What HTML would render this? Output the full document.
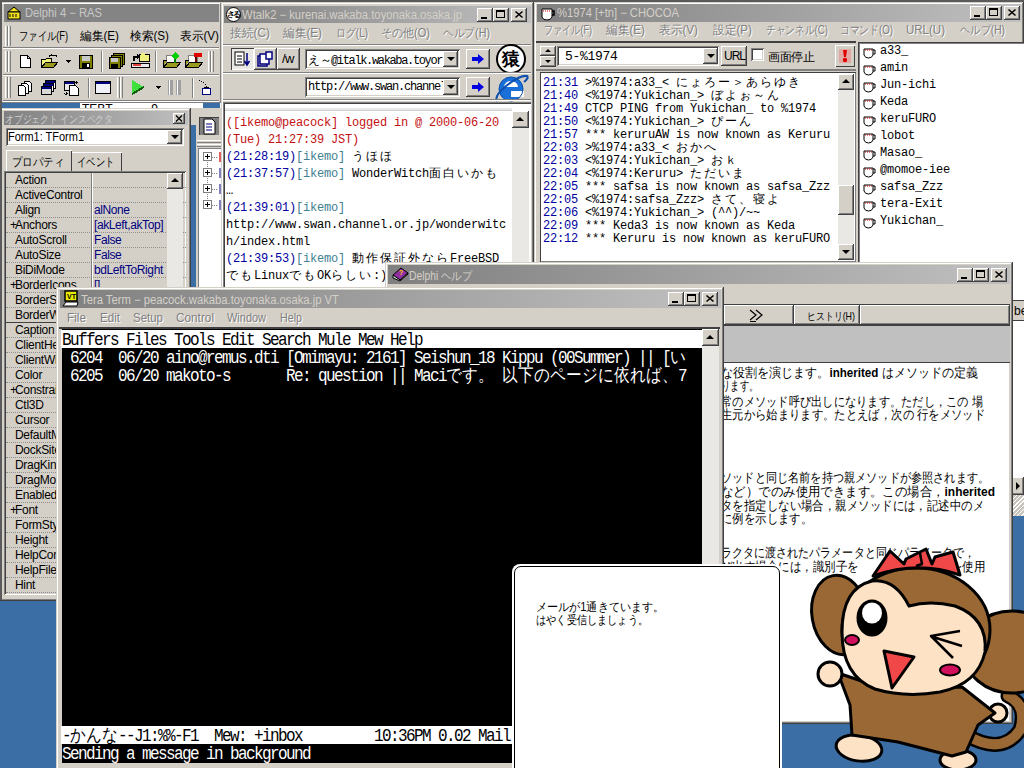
<!DOCTYPE html><html><head><meta charset="utf-8"><style>
*{margin:0;padding:0;box-sizing:border-box}
html,body{width:1024px;height:768px;overflow:hidden;background:#3a6ea5;font-family:"Liberation Sans",sans-serif;font-size:12px;color:#000}
.a{position:absolute}
.nw{white-space:nowrap}
.w{position:absolute;background:#d4d0c8;box-shadow:inset -1px -1px #404040,inset 1px 1px #d4d0c8,inset -2px -2px #808080,inset 2px 2px #fff}
.sunk{position:absolute;box-shadow:inset 1px 1px #808080,inset -1px -1px #fff,inset 2px 2px #404040,inset -2px -2px #d4d0c8}
.btn{position:absolute;background:#d4d0c8;box-shadow:inset -1px -1px #404040,inset 1px 1px #fff,inset -2px -2px #808080}
.m{font-family:"Liberation Mono",monospace}
.pre{white-space:pre}
.dis{color:#808080;text-shadow:1px 1px #fff}
.jp{font-size:11px;letter-spacing:-0.3px}
</style></head><body>
<div class="a" style="left:0px;top:0px;width:1024px;height:2px;background:#5a5a5a"></div>
<div class="w" style="left:0px;top:2px;width:222px;height:102px;"></div>
<div class="a" style="left:4px;top:4px;width:215px;height:18px;background:#848484;overflow:hidden"><span class="a nw" style="left:20px;top:0;line-height:18px;color:#d4d0c8;font-size:12px;"></span></div>
<svg class="a" style="left:25px;top:3px;overflow:visible" width="79" height="20"><text x="0" y="14" font-size="12" fill="#c8c8c8" textLength="77" lengthAdjust="spacingAndGlyphs" >Delphi 4 − RAS</text></svg>
<svg class="a" style="left:6px;top:5px" width="16" height="16"><path d="M2 7L8 2L14 7Z" fill="#f0e020" stroke="#000"/><rect x="2" y="7" width="12" height="7" fill="#f0e020" stroke="#000"/><path d="M4 9v3M7 9v3M10 9v3" stroke="#000"/></svg>
<svg class="a" style="left:19px;top:26px;overflow:visible" width="51" height="20"><text x="0" y="14" font-size="12" fill="#000" textLength="49" lengthAdjust="spacingAndGlyphs" >ファイル(F)</text></svg>
<svg class="a" style="left:80px;top:26px;overflow:visible" width="41" height="20"><text x="0" y="14" font-size="12" fill="#000" textLength="39" lengthAdjust="spacingAndGlyphs" >編集(E)</text></svg>
<svg class="a" style="left:130px;top:26px;overflow:visible" width="41" height="20"><text x="0" y="14" font-size="12" fill="#000" textLength="39" lengthAdjust="spacingAndGlyphs" >検索(S)</text></svg>
<svg class="a" style="left:180px;top:26px;overflow:visible" width="41" height="20"><text x="0" y="14" font-size="12" fill="#000" textLength="39" lengthAdjust="spacingAndGlyphs" >表示(V)</text></svg>
<div class="a" style="left:5px;top:26px;width:3px;height:20px;border-left:1px solid #fff;border-right:1px solid #808080"></div>
<div class="a" style="left:8px;top:26px;width:3px;height:20px;border-left:1px solid #fff;border-right:1px solid #808080"></div>
<div class="a" style="left:3px;top:47px;width:216px;height:2px;box-shadow:inset 0 1px #808080,inset 0 -1px #fff"></div>
<div class="a" style="left:3px;top:74px;width:216px;height:2px;box-shadow:inset 0 1px #808080,inset 0 -1px #fff"></div>
<div class="a" style="left:3px;top:100px;width:216px;height:2px;box-shadow:inset 0 1px #808080,inset 0 -1px #fff"></div>
<div class="a" style="left:5px;top:51px;width:3px;height:21px;border-left:1px solid #fff;border-right:1px solid #808080"></div>
<div class="a" style="left:8px;top:51px;width:3px;height:21px;border-left:1px solid #fff;border-right:1px solid #808080"></div>
<div class="a" style="left:5px;top:77px;width:3px;height:21px;border-left:1px solid #fff;border-right:1px solid #808080"></div>
<div class="a" style="left:8px;top:77px;width:3px;height:21px;border-left:1px solid #fff;border-right:1px solid #808080"></div>
<svg class="a" style="left:0;top:0" width="222" height="104" shape-rendering="crispEdges">
<g stroke="#000" stroke-width="1">
<path d="M20.5 55.5H27.5L30.5 58.5V67.5H20.5Z" fill="#fff"/><path d="M27.5 55.5V58.5H30.5" fill="none"/>
<path d="M41.5 59.5H45.5L46.5 58.5H51.5V67.5H41.5Z" fill="#f0f080"/>
<path d="M41.5 67.5L45.5 62.5H57.5L53.5 67.5Z" fill="#9a9a20"/>
<path d="M48.5 57.5Q51 53 55.5 56.5" fill="none"/><path d="M54 55h3v3z" fill="#000" stroke="none"/>
</g>
<path d="M65 60h6l-3 3z" fill="#000"/>
<rect x="79.5" y="55.5" width="13" height="13" fill="#808000" stroke="#000"/>
<rect x="82" y="56" width="8" height="5" fill="#c8c8c8"/><rect x="82" y="63" width="8" height="5" fill="#000"/><rect x="87" y="64" width="2" height="3" fill="#fff"/>
<rect x="101" y="51" width="1" height="21" fill="#808080"/><rect x="102" y="51" width="1" height="21" fill="#fff"/>
<g stroke="#000"><rect x="113.5" y="53.5" width="11" height="11" fill="#808000"/><rect x="111.5" y="55.5" width="11" height="11" fill="#808000"/><rect x="109.5" y="57.5" width="11" height="11" fill="#808000"/></g>
<rect x="111" y="58" width="7" height="4" fill="#c8c8c8"/><rect x="111" y="64" width="7" height="4" fill="#000"/>
<rect x="139.5" y="54.5" width="10" height="7" fill="#f0f080" stroke="#000"/><path d="M141 53h4v2h-4z" fill="#f0f080"/>
<path d="M133.5 60.5V56.5H138" fill="none" stroke="#000" stroke-width="2"/><path d="M137 54l3 2.5-3 2.5z" fill="#000"/>
<rect x="131.5" y="63.5" width="18" height="4" fill="#e8e8e8" stroke="#000"/><rect x="133" y="64" width="8" height="2" fill="#e04040"/>
<rect x="155" y="51" width="1" height="21" fill="#808080"/><rect x="156" y="51" width="1" height="21" fill="#fff"/>
<rect x="166.5" y="55.5" width="9" height="8" fill="#fff" stroke="#808080"/>
<path d="M163.5 67.5V60.5H166.5M163.5 67.5L167.5 62.5H180.5L176.5 67.5Z" fill="#9a9a20" stroke="#000"/>
<path d="M175 52l4 4-4 4-4-4z" fill="#00d000"/><rect x="174" y="59" width="2" height="4" fill="#008000"/>
<rect x="188.5" y="55.5" width="9" height="8" fill="#fff" stroke="#808080"/>
<path d="M185.5 67.5V60.5H188.5M185.5 67.5L189.5 62.5H202.5L198.5 67.5Z" fill="#9a9a20" stroke="#000"/>
<rect x="194" y="53" width="8" height="4" fill="#e00000"/><rect x="195" y="57" width="2" height="5" fill="#600000"/>
<g stroke="#000" fill="#fff">
<path d="M24.5 81.5H29.5L31.5 83.5V91.5H24.5Z"/><path d="M21.5 83.5H26.5L28.5 85.5V93.5H21.5Z"/><path d="M18.5 85.5H23.5L25.5 87.5V95.5H18.5Z"/>
<rect x="45.5" y="80.5" width="10" height="8"/><rect x="43.5" y="83.5" width="10" height="8"/><rect x="41.5" y="86.5" width="10" height="8" fill="#d8d8d8"/>
</g>
<rect x="46" y="81" width="9" height="2" fill="#000080"/><rect x="44" y="84" width="9" height="2" fill="#000080"/><rect x="42" y="87" width="9" height="2" fill="#000080"/>
<rect x="64.5" y="81.5" width="10" height="9" fill="#e8e8e8" stroke="#000"/><rect x="65" y="82" width="9" height="2" fill="#000080"/>
<path d="M69.5 85.5H75.5L78.5 88.5V95.5H69.5Z" fill="#fff" stroke="#000"/>
<path d="M76 81v3M74.5 82.5h3M66 92v3M64.5 93.5l1.5 1.5 1.5-1.5" stroke="#000" fill="none"/>
<rect x="88" y="78" width="1" height="20" fill="#808080"/><rect x="89" y="78" width="1" height="20" fill="#fff"/>
<rect x="95.5" y="81.5" width="15" height="12" fill="#f0f0f8" stroke="#000"/><rect x="96" y="82" width="14" height="2" fill="#000080"/>
<path d="M132 80L144 87L132 94Z" fill="#40e040"/><path d="M132 94L144 87" stroke="#106010" stroke-width="2" fill="none"/>
<path d="M155 86h6l-3 3z" fill="#000"/>
<rect x="168" y="80" width="5" height="15" fill="#a0a0a0"/><rect x="176" y="80" width="5" height="15" fill="#a0a0a0"/>
<rect x="169" y="80" width="1" height="15" fill="#fff"/><rect x="177" y="80" width="1" height="15" fill="#fff"/>
<rect x="192" y="78" width="1" height="20" fill="#808080"/><rect x="193" y="78" width="1" height="20" fill="#fff"/>
<path d="M199 80h1M201 81h1M203 82h1M205 84h1M206 86h1" stroke="#000"/>
<path d="M203 87h7l-3.5 3z" fill="#000"/>
<rect x="202.5" y="88.5" width="8" height="6" fill="#fff" stroke="#000080" stroke-width="1.5"/>
</svg>
<div class="a" style="left:208px;top:51px;width:3px;height:21px;border-left:1px solid #fff;border-right:1px solid #808080"></div>
<div class="a" style="left:211px;top:51px;width:3px;height:21px;border-left:1px solid #fff;border-right:1px solid #808080"></div>
<div class="a" style="left:117px;top:77px;width:3px;height:21px;border-left:1px solid #fff;border-right:1px solid #808080"></div>
<div class="a" style="left:120px;top:77px;width:3px;height:21px;border-left:1px solid #fff;border-right:1px solid #808080"></div>
<div class="a" style="left:0px;top:103px;width:222px;height:6px;background:#fff"></div>
<div class="a" style="left:0px;top:103px;width:80px;height:6px;background:#3a6ea5"></div>
<div class="a" style="left:203px;top:103px;width:17px;height:6px;background:#3a6ea5"></div>
<div class="a nw" style="left:82px;top:100px;font-size:12px;line-height:12px;overflow:hidden;height:9px;top:103px">TEBT.&nbsp;&nbsp;&nbsp;&nbsp;&nbsp;&nbsp;&nbsp;&nbsp;&nbsp;&nbsp;.9</div>
<div class="a" style="left:189px;top:108px;width:8px;height:180px;background:#d4d0c8"></div>
<div class="a" style="left:189px;top:125px;width:7px;height:162px;background:#3a6ea5"></div>
<div class="w" style="left:0px;top:108px;width:191px;height:493px;"></div>
<div class="a" style="left:4px;top:111px;width:184px;height:14px;background:linear-gradient(90deg,#808080,#c0c0c0);overflow:hidden"><span class="a nw" style="left:20px;top:0;line-height:14px;color:#d4d0c8;font-size:12px;"></span></div>
<svg class="a" style="left:5px;top:110px;overflow:visible" width="110" height="19"><text x="0" y="13" font-size="11" fill="#d0d0d0" textLength="108" lengthAdjust="spacingAndGlyphs" >オブジェクト インスペクタ</text></svg>
<div class="btn" style="left:173px;top:113px;width:12px;height:11px;"><svg width="12" height="11" class="a"><path d="M3 2.5l6 6M9 2.5l-6 6" stroke="#000" stroke-width="1.3"/></svg></div>
<div class="sunk" style="left:6px;top:128px;width:178px;height:18px;background:#fff"></div>
<svg class="a" style="left:8px;top:127px;overflow:visible" width="78" height="20"><text x="0" y="14" font-size="12" fill="#000" textLength="76" lengthAdjust="spacingAndGlyphs" >Form1: TForm1</text></svg>
<div class="btn" style="left:167px;top:130px;width:15px;height:14px;"><div class="a" style="left:4px;top:5px;width:0;height:0;border-left:4px solid transparent;border-right:4px solid transparent;border-top:4px solid #000"></div></div>
<div class="a" style="left:6px;top:150px;width:66px;height:22px;box-shadow:inset 1px 1px #fff,inset -1px 0 #404040"></div>
<svg class="a" style="left:12px;top:152px;overflow:visible" width="54" height="20"><text x="0" y="14" font-size="12" fill="#000" textLength="52" lengthAdjust="spacingAndGlyphs" >プロパティ</text></svg>
<div class="a" style="left:72px;top:152px;width:50px;height:20px;box-shadow:inset 0 1px #fff,inset -1px 0 #404040"></div>
<svg class="a" style="left:77px;top:152px;overflow:visible" width="39" height="20"><text x="0" y="14" font-size="12" fill="#000" textLength="37" lengthAdjust="spacingAndGlyphs" >イベント</text></svg>
<div class="sunk" style="left:4px;top:171px;width:182px;height:424px;background:#d4d0c8;overflow:hidden"><div class="a nw" style="left:6px;top:2px;font-size:12px;line-height:15px"></div><div class="a nw" style="left:11px;top:2px;font-size:12px;line-height:15px;letter-spacing:-0.3px">Action</div><div class="a" style="left:2px;top:16px;width:180px;height:1px;border-top:1px dotted #909090"></div><div class="a nw" style="left:6px;top:17px;font-size:12px;line-height:15px"></div><div class="a nw" style="left:11px;top:17px;font-size:12px;line-height:15px;letter-spacing:-0.3px">ActiveControl</div><div class="a" style="left:2px;top:31px;width:180px;height:1px;border-top:1px dotted #909090"></div><div class="a nw" style="left:6px;top:32px;font-size:12px;line-height:15px"></div><div class="a nw" style="left:11px;top:32px;font-size:12px;line-height:15px;letter-spacing:-0.3px">Align</div><div class="a nw" style="left:90px;top:32px;font-size:12px;line-height:15px;color:#000080;letter-spacing:-0.4px">alNone</div><div class="a" style="left:2px;top:46px;width:180px;height:1px;border-top:1px dotted #909090"></div><div class="a nw" style="left:6px;top:47px;font-size:12px;line-height:15px">+</div><div class="a nw" style="left:11px;top:47px;font-size:12px;line-height:15px;letter-spacing:-0.3px">Anchors</div><div class="a nw" style="left:90px;top:47px;font-size:12px;line-height:15px;color:#000080;letter-spacing:-0.4px">[akLeft,akTop]</div><div class="a" style="left:2px;top:61px;width:180px;height:1px;border-top:1px dotted #909090"></div><div class="a nw" style="left:6px;top:62px;font-size:12px;line-height:15px"></div><div class="a nw" style="left:11px;top:62px;font-size:12px;line-height:15px;letter-spacing:-0.3px">AutoScroll</div><div class="a nw" style="left:90px;top:62px;font-size:12px;line-height:15px;color:#000080;letter-spacing:-0.4px">False</div><div class="a" style="left:2px;top:76px;width:180px;height:1px;border-top:1px dotted #909090"></div><div class="a nw" style="left:6px;top:77px;font-size:12px;line-height:15px"></div><div class="a nw" style="left:11px;top:77px;font-size:12px;line-height:15px;letter-spacing:-0.3px">AutoSize</div><div class="a nw" style="left:90px;top:77px;font-size:12px;line-height:15px;color:#000080;letter-spacing:-0.4px">False</div><div class="a" style="left:2px;top:91px;width:180px;height:1px;border-top:1px dotted #909090"></div><div class="a nw" style="left:6px;top:92px;font-size:12px;line-height:15px"></div><div class="a nw" style="left:11px;top:92px;font-size:12px;line-height:15px;letter-spacing:-0.3px">BiDiMode</div><div class="a nw" style="left:90px;top:92px;font-size:12px;line-height:15px;color:#000080;letter-spacing:-0.4px">bdLeftToRight</div><div class="a" style="left:2px;top:106px;width:180px;height:1px;border-top:1px dotted #909090"></div><div class="a nw" style="left:6px;top:107px;font-size:12px;line-height:15px">+</div><div class="a nw" style="left:11px;top:107px;font-size:12px;line-height:15px;letter-spacing:-0.3px">BorderIcons</div><div class="a nw" style="left:90px;top:107px;font-size:12px;line-height:15px;color:#000080;letter-spacing:-0.4px">[]</div><div class="a" style="left:2px;top:121px;width:180px;height:1px;border-top:1px dotted #909090"></div><div class="a nw" style="left:6px;top:122px;font-size:12px;line-height:15px"></div><div class="a nw" style="left:11px;top:122px;font-size:12px;line-height:15px;letter-spacing:-0.3px">BorderStyle</div><div class="a" style="left:2px;top:136px;width:180px;height:1px;border-top:1px dotted #909090"></div><div class="a nw" style="left:6px;top:137px;font-size:12px;line-height:15px"></div><div class="a nw" style="left:11px;top:137px;font-size:12px;line-height:15px;letter-spacing:-0.3px">BorderWidth</div><div class="a" style="left:2px;top:151px;width:180px;height:1px;border-top:1px dotted #909090"></div><div class="a nw" style="left:6px;top:152px;font-size:12px;line-height:15px"></div><div class="a nw" style="left:11px;top:152px;font-size:12px;line-height:15px;letter-spacing:-0.3px">Caption</div><div class="a" style="left:2px;top:166px;width:180px;height:1px;border-top:1px dotted #909090"></div><div class="a nw" style="left:6px;top:167px;font-size:12px;line-height:15px"></div><div class="a nw" style="left:11px;top:167px;font-size:12px;line-height:15px;letter-spacing:-0.3px">ClientHeight</div><div class="a" style="left:2px;top:181px;width:180px;height:1px;border-top:1px dotted #909090"></div><div class="a nw" style="left:6px;top:182px;font-size:12px;line-height:15px"></div><div class="a nw" style="left:11px;top:182px;font-size:12px;line-height:15px;letter-spacing:-0.3px">ClientWidth</div><div class="a" style="left:2px;top:196px;width:180px;height:1px;border-top:1px dotted #909090"></div><div class="a nw" style="left:6px;top:197px;font-size:12px;line-height:15px"></div><div class="a nw" style="left:11px;top:197px;font-size:12px;line-height:15px;letter-spacing:-0.3px">Color</div><div class="a" style="left:2px;top:211px;width:180px;height:1px;border-top:1px dotted #909090"></div><div class="a nw" style="left:6px;top:212px;font-size:12px;line-height:15px">+</div><div class="a nw" style="left:11px;top:212px;font-size:12px;line-height:15px;letter-spacing:-0.3px">Constraints</div><div class="a" style="left:2px;top:226px;width:180px;height:1px;border-top:1px dotted #909090"></div><div class="a nw" style="left:6px;top:227px;font-size:12px;line-height:15px"></div><div class="a nw" style="left:11px;top:227px;font-size:12px;line-height:15px;letter-spacing:-0.3px">Ctl3D</div><div class="a" style="left:2px;top:241px;width:180px;height:1px;border-top:1px dotted #909090"></div><div class="a nw" style="left:6px;top:242px;font-size:12px;line-height:15px"></div><div class="a nw" style="left:11px;top:242px;font-size:12px;line-height:15px;letter-spacing:-0.3px">Cursor</div><div class="a" style="left:2px;top:256px;width:180px;height:1px;border-top:1px dotted #909090"></div><div class="a nw" style="left:6px;top:257px;font-size:12px;line-height:15px"></div><div class="a nw" style="left:11px;top:257px;font-size:12px;line-height:15px;letter-spacing:-0.3px">DefaultMonitor</div><div class="a" style="left:2px;top:271px;width:180px;height:1px;border-top:1px dotted #909090"></div><div class="a nw" style="left:6px;top:272px;font-size:12px;line-height:15px"></div><div class="a nw" style="left:11px;top:272px;font-size:12px;line-height:15px;letter-spacing:-0.3px">DockSite</div><div class="a" style="left:2px;top:286px;width:180px;height:1px;border-top:1px dotted #909090"></div><div class="a nw" style="left:6px;top:287px;font-size:12px;line-height:15px"></div><div class="a nw" style="left:11px;top:287px;font-size:12px;line-height:15px;letter-spacing:-0.3px">DragKind</div><div class="a" style="left:2px;top:301px;width:180px;height:1px;border-top:1px dotted #909090"></div><div class="a nw" style="left:6px;top:302px;font-size:12px;line-height:15px"></div><div class="a nw" style="left:11px;top:302px;font-size:12px;line-height:15px;letter-spacing:-0.3px">DragMode</div><div class="a" style="left:2px;top:316px;width:180px;height:1px;border-top:1px dotted #909090"></div><div class="a nw" style="left:6px;top:317px;font-size:12px;line-height:15px"></div><div class="a nw" style="left:11px;top:317px;font-size:12px;line-height:15px;letter-spacing:-0.3px">Enabled</div><div class="a" style="left:2px;top:331px;width:180px;height:1px;border-top:1px dotted #909090"></div><div class="a nw" style="left:6px;top:332px;font-size:12px;line-height:15px">+</div><div class="a nw" style="left:11px;top:332px;font-size:12px;line-height:15px;letter-spacing:-0.3px">Font</div><div class="a" style="left:2px;top:346px;width:180px;height:1px;border-top:1px dotted #909090"></div><div class="a nw" style="left:6px;top:347px;font-size:12px;line-height:15px"></div><div class="a nw" style="left:11px;top:347px;font-size:12px;line-height:15px;letter-spacing:-0.3px">FormStyle</div><div class="a" style="left:2px;top:361px;width:180px;height:1px;border-top:1px dotted #909090"></div><div class="a nw" style="left:6px;top:362px;font-size:12px;line-height:15px"></div><div class="a nw" style="left:11px;top:362px;font-size:12px;line-height:15px;letter-spacing:-0.3px">Height</div><div class="a" style="left:2px;top:376px;width:180px;height:1px;border-top:1px dotted #909090"></div><div class="a nw" style="left:6px;top:377px;font-size:12px;line-height:15px"></div><div class="a nw" style="left:11px;top:377px;font-size:12px;line-height:15px;letter-spacing:-0.3px">HelpContext</div><div class="a" style="left:2px;top:391px;width:180px;height:1px;border-top:1px dotted #909090"></div><div class="a nw" style="left:6px;top:392px;font-size:12px;line-height:15px"></div><div class="a nw" style="left:11px;top:392px;font-size:12px;line-height:15px;letter-spacing:-0.3px">HelpFile</div><div class="a" style="left:2px;top:406px;width:180px;height:1px;border-top:1px dotted #909090"></div><div class="a nw" style="left:6px;top:407px;font-size:12px;line-height:15px"></div><div class="a nw" style="left:11px;top:407px;font-size:12px;line-height:15px;letter-spacing:-0.3px">Hint</div><div class="a" style="left:2px;top:421px;width:180px;height:1px;border-top:1px dotted #909090"></div><div class="a" style="left:87px;top:2px;width:2px;height:430px;border-left:1px solid #808080;border-right:1px solid #fff"></div></div>
<div class="a" style="left:5px;top:322px;width:52px;height:15px;box-shadow:inset 1px 1px #404040"></div>
<div class="a" style="left:167px;top:173px;width:16px;height:400px;background:#eae8e4"></div>
<div class="btn" style="left:167px;top:173px;width:16px;height:16px;"><div class="a" style="left:4px;top:5px;width:0;height:0;border-left:4px solid transparent;border-right:4px solid transparent;border-bottom:4px solid #000"></div></div>
<div class="a" style="left:196px;top:108px;width:26px;height:180px;background:#d4d0c8"></div>
<div class="a" style="left:199px;top:117px;width:20px;height:18px;background:#808080;box-shadow:inset 1px 1px #404040"><svg class="a" style="left:4px;top:1px" width="14" height="17"><path d="M1 1h8l3 3v12H1z" fill="#fff" stroke="#000"/><path d="M3 6h6M3 9h6M3 12h6" stroke="#000080" stroke-width="1.2"/></svg></div>
<div class="a" style="left:197px;top:140px;width:24px;height:3px;border-top:1px solid #fff;border-bottom:1px solid #808080"></div>
<div class="a" style="left:197px;top:144px;width:24px;height:3px;border-top:1px solid #fff;border-bottom:1px solid #808080"></div>
<div class="a" style="left:198px;top:148px;width:23px;height:140px;background:#fff;box-shadow:inset 1px 1px #808080"></div>
<div class="a" style="left:207px;top:162px;width:1px;height:45px;border-left:1px dotted #808080"></div>
<div class="a" style="left:203px;top:152px;width:9px;height:9px;border:1px solid #808080;background:#fff"><div class="a" style="left:1px;top:3px;width:5px;height:1px;background:#000"></div><div class="a" style="left:3px;top:1px;width:1px;height:5px;background:#000"></div></div>
<div class="a" style="left:212px;top:157px;width:5px;height:1px;border-top:1px dotted #808080"></div>
<div class="a" style="left:203px;top:168px;width:9px;height:9px;border:1px solid #808080;background:#fff"><div class="a" style="left:1px;top:3px;width:5px;height:1px;background:#000"></div><div class="a" style="left:3px;top:1px;width:1px;height:5px;background:#000"></div></div>
<div class="a" style="left:212px;top:173px;width:5px;height:1px;border-top:1px dotted #808080"></div>
<div class="a" style="left:203px;top:184px;width:9px;height:9px;border:1px solid #808080;background:#fff"><div class="a" style="left:1px;top:3px;width:5px;height:1px;background:#000"></div><div class="a" style="left:3px;top:1px;width:1px;height:5px;background:#000"></div></div>
<div class="a" style="left:212px;top:189px;width:5px;height:1px;border-top:1px dotted #808080"></div>
<div class="a" style="left:203px;top:200px;width:9px;height:9px;border:1px solid #808080;background:#fff"><div class="a" style="left:1px;top:3px;width:5px;height:1px;background:#000"></div><div class="a" style="left:3px;top:1px;width:1px;height:5px;background:#000"></div></div>
<div class="a" style="left:212px;top:205px;width:5px;height:1px;border-top:1px dotted #808080"></div>
<div class="a" style="left:219px;top:152px;width:2px;height:10px;background:#e06060"></div>
<div class="a" style="left:219px;top:168px;width:2px;height:10px;background:#8080c0"></div>
<div class="a" style="left:219px;top:184px;width:2px;height:10px;background:#8080c0"></div>
<div class="a" style="left:219px;top:200px;width:2px;height:10px;background:#8080c0"></div>
<div class="w" style="left:221px;top:2px;width:313px;height:290px;"></div>
<div class="a" style="left:224px;top:6px;width:307px;height:17px;background:linear-gradient(90deg,#808080,#c0c0c0);overflow:hidden"><span class="a nw" style="left:20px;top:0;line-height:17px;color:#d4d0c8;font-size:12px;"></span></div>
<svg class="a" style="left:242px;top:5px;overflow:visible" width="222" height="20"><text x="0" y="14" font-size="12" fill="#d4d0c8" textLength="220" lengthAdjust="spacingAndGlyphs" >Wtalk2 − kurenai.wakaba.toyonaka.osaka.jp</text></svg>
<div class="a" style="left:226px;top:7px;width:15px;height:15px;border-radius:50%;background:#fff;border:1px solid #000;font-size:8px;font-weight:bold;line-height:13px;text-align:center;white-space:nowrap;letter-spacing:-2px;text-indent:-2px">さる</div>
<div class="btn" style="left:511px;top:8px;width:16px;height:14px;"><svg width="16" height="14" class="a" style="left:0;top:0"><path d="M4.5 3.5l7 6M11.5 3.5l-7 6" stroke="#000" stroke-width="1.6"/></svg></div>
<div class="btn" style="left:493px;top:8px;width:16px;height:14px;"><div class="a" style="left:3px;top:2px;width:9px;height:8px;border:1px solid #000;border-top-width:2px"></div></div>
<div class="btn" style="left:477px;top:8px;width:16px;height:14px;"><div class="a" style="left:4px;top:9px;width:6px;height:2px;background:#000"></div></div>
<svg class="a" style="left:230px;top:23px;overflow:visible" width="42" height="20"><text x="1" y="15" font-size="12" fill="#fff" textLength="40" lengthAdjust="spacingAndGlyphs" >接続(C)</text><text x="0" y="14" font-size="12" fill="#808080" textLength="40" lengthAdjust="spacingAndGlyphs" >接続(C)</text></svg>
<svg class="a" style="left:283px;top:23px;overflow:visible" width="41" height="20"><text x="1" y="15" font-size="12" fill="#fff" textLength="39" lengthAdjust="spacingAndGlyphs" >編集(E)</text><text x="0" y="14" font-size="12" fill="#808080" textLength="39" lengthAdjust="spacingAndGlyphs" >編集(E)</text></svg>
<svg class="a" style="left:336px;top:23px;overflow:visible" width="34" height="20"><text x="1" y="15" font-size="12" fill="#fff" textLength="32" lengthAdjust="spacingAndGlyphs" >ログ(L)</text><text x="0" y="14" font-size="12" fill="#808080" textLength="32" lengthAdjust="spacingAndGlyphs" >ログ(L)</text></svg>
<svg class="a" style="left:381px;top:23px;overflow:visible" width="51" height="20"><text x="1" y="15" font-size="12" fill="#fff" textLength="49" lengthAdjust="spacingAndGlyphs" >その他(O)</text><text x="0" y="14" font-size="12" fill="#808080" textLength="49" lengthAdjust="spacingAndGlyphs" >その他(O)</text></svg>
<svg class="a" style="left:443px;top:23px;overflow:visible" width="49" height="20"><text x="1" y="15" font-size="12" fill="#fff" textLength="47" lengthAdjust="spacingAndGlyphs" >ヘルプ(H)</text><text x="0" y="14" font-size="12" fill="#808080" textLength="47" lengthAdjust="spacingAndGlyphs" >ヘルプ(H)</text></svg>
<div class="a" style="left:223px;top:44px;width:308px;height:2px;box-shadow:inset 0 1px #808080,inset 0 -1px #fff"></div>
<div class="a" style="left:231px;top:48px;width:23px;height:22px;box-shadow:inset 1px 1px #404040,inset -1px -1px #fff;background:#eae8e4"><svg class="a" style="left:3px;top:3px" width="17" height="16"><rect x="1" y="1" width="9" height="13" fill="#fff" stroke="#000"/><path d="M3 5h5M3 8h5M3 11h5" stroke="#000"/><path d="M13 2v11M10.5 10l2.5 4 2.5-4" stroke="#000080" stroke-width="1.5" fill="none"/></svg></div>
<div class="btn" style="left:254px;top:48px;width:23px;height:22px;"><svg class="a" style="left:3px;top:3px" width="17" height="16"><rect x="1" y="5" width="9" height="10" fill="#d4d0c8" stroke="#000080" stroke-width="1.5"/><rect x="3" y="3" width="9" height="10" fill="#fff" stroke="#000080" stroke-width="1.5"/><rect x="9" y="1" width="6" height="7" fill="#fff" stroke="#000080" stroke-width="1.5"/></svg></div>
<div class="btn" style="left:277px;top:48px;width:23px;height:22px;"><span class="a nw" style="left:5px;top:3px;font-size:13px;letter-spacing:-0.5px">/w</span></div>
<div class="sunk" style="left:305px;top:49px;width:155px;height:20px;background:#fff"><span class="a nw m" style="left:3px;top:3px;font-size:12px;letter-spacing:-1.35px"><span style="letter-spacing:-0.5px">え～</span>@italk.wakaba.toyor</span></div>
<div class="btn" style="left:443px;top:51px;width:15px;height:16px;"><div class="a" style="left:4px;top:6px;border-left:4px solid transparent;border-right:4px solid transparent;border-top:4px solid #000"></div></div>
<div class="btn" style="left:466px;top:49px;width:24px;height:20px;"><svg class="a" style="left:5px;top:4px" width="14" height="12"><path d="M1 4h6V1l6 5-6 5V8H1z" fill="#0000e0"/></svg></div>
<div class="a" style="left:496px;top:44px;width:30px;height:30px;border-radius:50%;background:#fff;border:2px solid #000;font-size:18px;line-height:26px;text-align:center;font-weight:bold;font-family:'Liberation Serif',serif">猿</div>
<div class="a" style="left:223px;top:72px;width:308px;height:2px;box-shadow:inset 0 1px #808080,inset 0 -1px #fff"></div>
<div class="sunk" style="left:305px;top:77px;width:155px;height:20px;background:#fff"><span class="a nw m" style="left:3px;top:3px;font-size:12px;letter-spacing:-1.2px">http://www.swan.channel</span></div>
<div class="btn" style="left:443px;top:79px;width:15px;height:16px;"><div class="a" style="left:4px;top:6px;border-left:4px solid transparent;border-right:4px solid transparent;border-top:4px solid #000"></div></div>
<div class="btn" style="left:466px;top:77px;width:24px;height:20px;"><svg class="a" style="left:5px;top:4px" width="14" height="12"><path d="M1 4h6V1l6 5-6 5V8H1z" fill="#0000e0"/></svg></div>
<svg class="a" style="left:494px;top:72px" width="36" height="32"><circle cx="17" cy="17" r="12" fill="#1a70d8"/><path d="M10 15a7 6 0 0 1 14 0z" fill="#fff"/><path d="M9 15h16v2H9z" fill="#1a70d8"/><path d="M17 19h13v6H17z" fill="#fff"/><path d="M24 19a7 7 0 0 1-14 0" fill="none" stroke="#1a70d8" stroke-width="0"/><path d="M3 29Q0 24 12 14Q26 3 33 4Q35 6 30 10" fill="none" stroke="#1050b0" stroke-width="2.2"/><circle cx="17" cy="17" r="12" fill="none" stroke="#0850a8" stroke-width="1"/></svg>
<div class="a" style="left:223px;top:99px;width:308px;height:2px;box-shadow:inset 0 1px #808080,inset 0 -1px #fff"></div>
<div class="a" style="left:223px;top:102px;width:308px;height:190px;background:#fff;box-shadow:inset 1px 1px #808080,inset 2px 2px #404040"></div>
<div class="a" style="left:225px;top:104px;width:287px;height:7px;background:#fff;border-bottom:1px solid #d0d0d0;box-shadow:inset 0 -2px #e8e8e8"></div>
<div class="a nw m" style="left:226px;top:115.0px;font-size:12px;line-height:16px;letter-spacing:-0.2px"><span style="color:#c41010">([ikemo@peacock] logged in @ 2000-06-20</span></div>
<div class="a nw m" style="left:226px;top:132.0px;font-size:12px;line-height:16px;letter-spacing:-0.2px"><span style="color:#c41010">(Tue) 21:27:39 JST)</span></div>
<div class="a nw m" style="left:226px;top:149.0px;font-size:12px;line-height:16px;letter-spacing:-0.2px"><span style="color:#0000a0">(21:28:19)</span><span style="color:#408090">[ikemo]</span> <span style="letter-spacing:2px">うほほ</span></div>
<div class="a nw m" style="left:226px;top:166.0px;font-size:12px;line-height:16px;letter-spacing:-0.2px"><span style="color:#0000a0">(21:37:57)</span><span style="color:#408090">[ikemo]</span> WonderWitch<span style="letter-spacing:2px">面白いかも</span></div>
<div class="a nw m" style="left:226px;top:183.0px;font-size:12px;line-height:16px;letter-spacing:-0.2px">…</div>
<div class="a nw m" style="left:226px;top:200.0px;font-size:12px;line-height:16px;letter-spacing:-0.2px"><span style="color:#0000a0">(21:39:01)</span><span style="color:#408090">[ikemo]</span></div>
<div class="a nw m" style="left:226px;top:217.0px;font-size:12px;line-height:16px;letter-spacing:-0.2px">http://www.swan.channel.or.jp/wonderwitc</div>
<div class="a nw m" style="left:226px;top:234.0px;font-size:12px;line-height:16px;letter-spacing:-0.2px">h/index.html</div>
<div class="a nw m" style="left:226px;top:251.0px;font-size:12px;line-height:16px;letter-spacing:-0.2px"><span style="color:#0000a0">(21:39:53)</span><span style="color:#408090">[ikemo]</span> <span style="letter-spacing:2px">動作保証外なら</span>FreeBSD</div>
<div class="a nw m" style="left:226px;top:268.0px;font-size:12px;line-height:16px;letter-spacing:-0.2px"><span style="letter-spacing:2px">でも</span>Linux<span style="letter-spacing:2px">でも</span>OK<span style="letter-spacing:2px">らしい</span>:)</div>
<div class="a" style="left:512px;top:111px;width:17px;height:180px;background:#eae8e4"></div>
<div class="btn" style="left:512px;top:111px;width:17px;height:17px;"><div class="a" style="left:4px;top:6px;border-left:4px solid transparent;border-right:4px solid transparent;border-bottom:4px solid #000"></div></div>
<div class="w" style="left:534px;top:2px;width:490px;height:264px;"></div>
<div class="a" style="left:537px;top:4px;width:484px;height:18px;background:linear-gradient(90deg,#808080,#c0c0c0);overflow:hidden"><span class="a nw" style="left:20px;top:0;line-height:18px;color:#d4d0c8;font-size:12px;"></span></div>
<svg class="a" style="left:557px;top:3px;overflow:visible" width="124" height="20"><text x="0" y="14" font-size="12" fill="#d4d0c8" textLength="122" lengthAdjust="spacingAndGlyphs" >%1974 [+tn] − CHOCOA</text></svg>
<svg class="a" style="left:540px;top:5px" width="16" height="16"><path d="M2 4h10v8q-1 3-5 3t-5-3z" fill="#fff" stroke="#000"/><path d="M12 6h2v4h-2" fill="none" stroke="#000" stroke-width="1.5"/><path d="M3 6h8" stroke="#c00000" stroke-dasharray="1 1"/></svg>
<div class="btn" style="left:1004px;top:6px;width:16px;height:14px;"><svg width="16" height="14" class="a" style="left:0;top:0"><path d="M4.5 3.5l7 6M11.5 3.5l-7 6" stroke="#000" stroke-width="1.6"/></svg></div>
<div class="btn" style="left:986px;top:6px;width:16px;height:14px;"><div class="a" style="left:3px;top:2px;width:9px;height:8px;border:1px solid #000;border-top-width:2px"></div></div>
<div class="btn" style="left:970px;top:6px;width:16px;height:14px;"><div class="a" style="left:4px;top:9px;width:6px;height:2px;background:#000"></div></div>
<svg class="a" style="left:544px;top:20px;overflow:visible" width="50" height="20"><text x="1" y="15" font-size="12" fill="#fff" textLength="48" lengthAdjust="spacingAndGlyphs" >ファイル(F)</text><text x="0" y="14" font-size="12" fill="#808080" textLength="48" lengthAdjust="spacingAndGlyphs" >ファイル(F)</text></svg>
<svg class="a" style="left:606px;top:20px;overflow:visible" width="41" height="20"><text x="1" y="15" font-size="12" fill="#fff" textLength="39" lengthAdjust="spacingAndGlyphs" >編集(E)</text><text x="0" y="14" font-size="12" fill="#808080" textLength="39" lengthAdjust="spacingAndGlyphs" >編集(E)</text></svg>
<svg class="a" style="left:659px;top:20px;overflow:visible" width="41" height="20"><text x="1" y="15" font-size="12" fill="#fff" textLength="39" lengthAdjust="spacingAndGlyphs" >表示(V)</text><text x="0" y="14" font-size="12" fill="#808080" textLength="39" lengthAdjust="spacingAndGlyphs" >表示(V)</text></svg>
<svg class="a" style="left:713px;top:20px;overflow:visible" width="41" height="20"><text x="1" y="15" font-size="12" fill="#fff" textLength="39" lengthAdjust="spacingAndGlyphs" >設定(P)</text><text x="0" y="14" font-size="12" fill="#808080" textLength="39" lengthAdjust="spacingAndGlyphs" >設定(P)</text></svg>
<svg class="a" style="left:766px;top:20px;overflow:visible" width="64" height="20"><text x="1" y="15" font-size="12" fill="#fff" textLength="62" lengthAdjust="spacingAndGlyphs" >チャンネル(C)</text><text x="0" y="14" font-size="12" fill="#808080" textLength="62" lengthAdjust="spacingAndGlyphs" >チャンネル(C)</text></svg>
<svg class="a" style="left:840px;top:20px;overflow:visible" width="55" height="20"><text x="1" y="15" font-size="12" fill="#fff" textLength="53" lengthAdjust="spacingAndGlyphs" >コマンド(O)</text><text x="0" y="14" font-size="12" fill="#808080" textLength="53" lengthAdjust="spacingAndGlyphs" >コマンド(O)</text></svg>
<svg class="a" style="left:906px;top:20px;overflow:visible" width="41" height="20"><text x="1" y="15" font-size="12" fill="#fff" textLength="39" lengthAdjust="spacingAndGlyphs" >URL(U)</text><text x="0" y="14" font-size="12" fill="#808080" textLength="39" lengthAdjust="spacingAndGlyphs" >URL(U)</text></svg>
<svg class="a" style="left:960px;top:20px;overflow:visible" width="47" height="20"><text x="1" y="15" font-size="12" fill="#fff" textLength="45" lengthAdjust="spacingAndGlyphs" >ヘルプ(H)</text><text x="0" y="14" font-size="12" fill="#808080" textLength="45" lengthAdjust="spacingAndGlyphs" >ヘルプ(H)</text></svg>
<div class="a" style="left:536px;top:41px;width:320px;height:2px;background:#404040"></div>
<div class="btn" style="left:540px;top:46px;width:16px;height:10px;"><div class="a" style="left:5px;top:3px;border-left:3px solid transparent;border-right:3px solid transparent;border-bottom:3px solid #000"></div></div>
<div class="btn" style="left:540px;top:56px;width:16px;height:11px;"><div class="a" style="left:5px;top:4px;border-left:3px solid transparent;border-right:3px solid transparent;border-top:3px solid #000"></div></div>
<div class="sunk" style="left:557px;top:46px;width:162px;height:20px;background:#fff"><span class="a nw m" style="left:8px;top:3px;font-size:13px;letter-spacing:-0.3px">5-%1974</span></div>
<div class="btn" style="left:703px;top:48px;width:15px;height:16px;"><div class="a" style="left:4px;top:6px;border-left:4px solid transparent;border-right:4px solid transparent;border-top:4px solid #000"></div></div>
<div class="btn" style="left:721px;top:46px;width:26px;height:20px;"><span class="a nw" style="left:3px;top:3px;font-size:12px;letter-spacing:-1px">URL</span></div>
<div class="sunk" style="left:751px;top:48px;width:13px;height:13px;background:#fff"></div>
<div class="a nw" style="left:768px;top:49px;font-size:12px;letter-spacing:-0.5px">画面停止</div>
<div class="a" style="left:835px;top:45px;width:20px;height:22px;box-shadow:inset 1px 1px #fff,inset -1px -1px #404040"><svg class="a" style="left:3px;top:3px" width="14" height="16"><rect x="1" y="1" width="12" height="14" fill="#f08080" opacity=".5"/><path d="M5 2h4l-1 7h-2z" fill="#e00000"/><circle cx="7" cy="12" r="2.2" fill="#e00000"/></svg></div>
<div class="a" style="left:536px;top:69px;width:320px;height:2px;background:#808080"></div>
<div class="a" style="left:540px;top:72px;width:316px;height:190px;background:#fff;box-shadow:inset 1px 1px #404040,inset -1px -1px #808080"></div>
<div class="a nw m" style="left:543px;top:77px;font-size:12px;line-height:13px;letter-spacing:-0.2px"><span style="color:#0000a0">21:31</span> &gt;%1974:a33_&lt; <span style="letter-spacing:2px">にょろー＞あらゆき</span></div>
<div class="a nw m" style="left:543px;top:90px;font-size:12px;line-height:13px;letter-spacing:-0.2px"><span style="color:#0000a0">21:40</span> &lt;%1974:Yukichan_&gt; <span style="letter-spacing:2px">ぼよぉ～ん</span></div>
<div class="a nw m" style="left:543px;top:103px;font-size:12px;line-height:13px;letter-spacing:-0.2px"><span style="color:#0000a0">21:49</span> CTCP PING from Yukichan_ to %1974</div>
<div class="a nw m" style="left:543px;top:116px;font-size:12px;line-height:13px;letter-spacing:-0.2px"><span style="color:#0000a0">21:50</span> &lt;%1974:Yukichan_&gt; <span style="letter-spacing:2px">ぴーん</span></div>
<div class="a nw m" style="left:543px;top:129px;font-size:12px;line-height:13px;letter-spacing:-0.2px"><span style="color:#0000a0">21:57</span> *** keruruAW is now known as Keruru</div>
<div class="a nw m" style="left:543px;top:142px;font-size:12px;line-height:13px;letter-spacing:-0.2px"><span style="color:#0000a0">22:03</span> &gt;%1974:a33_&lt; <span style="letter-spacing:2px">おかへ</span></div>
<div class="a nw m" style="left:543px;top:155px;font-size:12px;line-height:13px;letter-spacing:-0.2px"><span style="color:#0000a0">22:03</span> &lt;%1974:Yukichan_&gt; <span style="letter-spacing:2px">おｋ</span></div>
<div class="a nw m" style="left:543px;top:168px;font-size:12px;line-height:13px;letter-spacing:-0.2px"><span style="color:#0000a0">22:04</span> &lt;%1974:Keruru&gt; <span style="letter-spacing:2px">ただいま</span></div>
<div class="a nw m" style="left:543px;top:181px;font-size:12px;line-height:13px;letter-spacing:-0.2px"><span style="color:#0000a0">22:05</span> *** safsa is now known as safsa_Zzz</div>
<div class="a nw m" style="left:543px;top:194px;font-size:12px;line-height:13px;letter-spacing:-0.2px"><span style="color:#0000a0">22:05</span> &lt;%1974:safsa_Zzz&gt; <span style="letter-spacing:2px">さて、寝よ</span></div>
<div class="a nw m" style="left:543px;top:207px;font-size:12px;line-height:13px;letter-spacing:-0.2px"><span style="color:#0000a0">22:06</span> &lt;%1974:Yukichan_&gt; (^^)/~~</div>
<div class="a nw m" style="left:543px;top:220px;font-size:12px;line-height:13px;letter-spacing:-0.2px"><span style="color:#0000a0">22:09</span> *** Keda3 is now known as Keda</div>
<div class="a nw m" style="left:543px;top:233px;font-size:12px;line-height:13px;letter-spacing:-0.2px"><span style="color:#0000a0">22:12</span> *** Keruru is now known as keruFURO</div>
<div class="a" style="left:838px;top:74px;width:16px;height:186px;background:#eae8e4"></div>
<div class="btn" style="left:838px;top:74px;width:16px;height:16px;"><div class="a" style="left:4px;top:5px;border-left:4px solid transparent;border-right:4px solid transparent;border-bottom:4px solid #000"></div></div>
<div class="btn" style="left:838px;top:185px;width:16px;height:30px;"></div>
<div class="btn" style="left:838px;top:244px;width:16px;height:16px;"><div class="a" style="left:4px;top:6px;border-left:4px solid transparent;border-right:4px solid transparent;border-top:4px solid #000"></div></div>
<div class="a" style="left:858px;top:42px;width:166px;height:222px;background:#fff;box-shadow:inset 1px 1px #404040,inset 2px 2px #808080"></div>
<svg class="a" style="left:863px;top:45px" width="14" height="14"><path d="M1 4h9v6q-1 3-4.5 3T1 10z" fill="#fff" stroke="#000"/><path d="M10 5h2v4h-2" fill="none" stroke="#000"/><path d="M2 5h7" stroke="#c00000" stroke-dasharray="1 1"/></svg>
<div class="a nw m" style="left:880px;top:44px;font-size:12px;line-height:15px;letter-spacing:-0.2px">a33_</div>
<svg class="a" style="left:863px;top:62px" width="14" height="14"><path d="M1 4h9v6q-1 3-4.5 3T1 10z" fill="#fff" stroke="#000"/><path d="M10 5h2v4h-2" fill="none" stroke="#000"/><path d="M2 5h7" stroke="#c00000" stroke-dasharray="1 1"/></svg>
<div class="a nw m" style="left:880px;top:61px;font-size:12px;line-height:15px;letter-spacing:-0.2px">amin</div>
<svg class="a" style="left:863px;top:79px" width="14" height="14"><path d="M1 4h9v6q-1 3-4.5 3T1 10z" fill="#fff" stroke="#000"/><path d="M10 5h2v4h-2" fill="none" stroke="#000"/><path d="M2 5h7" stroke="#c00000" stroke-dasharray="1 1"/></svg>
<div class="a nw m" style="left:880px;top:78px;font-size:12px;line-height:15px;letter-spacing:-0.2px">Jun-ichi</div>
<svg class="a" style="left:863px;top:96px" width="14" height="14"><path d="M1 4h9v6q-1 3-4.5 3T1 10z" fill="#fff" stroke="#000"/><path d="M10 5h2v4h-2" fill="none" stroke="#000"/><path d="M2 5h7" stroke="#c00000" stroke-dasharray="1 1"/></svg>
<div class="a nw m" style="left:880px;top:95px;font-size:12px;line-height:15px;letter-spacing:-0.2px">Keda</div>
<svg class="a" style="left:863px;top:113px" width="14" height="14"><path d="M1 4h9v6q-1 3-4.5 3T1 10z" fill="#fff" stroke="#000"/><path d="M10 5h2v4h-2" fill="none" stroke="#000"/><path d="M2 5h7" stroke="#c00000" stroke-dasharray="1 1"/></svg>
<div class="a nw m" style="left:880px;top:112px;font-size:12px;line-height:15px;letter-spacing:-0.2px">keruFURO</div>
<svg class="a" style="left:863px;top:130px" width="14" height="14"><path d="M1 4h9v6q-1 3-4.5 3T1 10z" fill="#fff" stroke="#000"/><path d="M10 5h2v4h-2" fill="none" stroke="#000"/><path d="M2 5h7" stroke="#c00000" stroke-dasharray="1 1"/></svg>
<div class="a nw m" style="left:880px;top:129px;font-size:12px;line-height:15px;letter-spacing:-0.2px">lobot</div>
<svg class="a" style="left:863px;top:147px" width="14" height="14"><path d="M1 4h9v6q-1 3-4.5 3T1 10z" fill="#fff" stroke="#000"/><path d="M10 5h2v4h-2" fill="none" stroke="#000"/><path d="M2 5h7" stroke="#c00000" stroke-dasharray="1 1"/></svg>
<div class="a nw m" style="left:880px;top:146px;font-size:12px;line-height:15px;letter-spacing:-0.2px">Masao_</div>
<svg class="a" style="left:863px;top:164px" width="14" height="14"><path d="M1 4h9v6q-1 3-4.5 3T1 10z" fill="#fff" stroke="#000"/><path d="M10 5h2v4h-2" fill="none" stroke="#000"/><path d="M2 5h7" stroke="#c00000" stroke-dasharray="1 1"/></svg>
<div class="a nw m" style="left:880px;top:163px;font-size:12px;line-height:15px;letter-spacing:-0.2px">@momoe-iee</div>
<svg class="a" style="left:863px;top:181px" width="14" height="14"><path d="M1 4h9v6q-1 3-4.5 3T1 10z" fill="#fff" stroke="#000"/><path d="M10 5h2v4h-2" fill="none" stroke="#000"/><path d="M2 5h7" stroke="#c00000" stroke-dasharray="1 1"/></svg>
<div class="a nw m" style="left:880px;top:180px;font-size:12px;line-height:15px;letter-spacing:-0.2px">safsa_Zzz</div>
<svg class="a" style="left:863px;top:198px" width="14" height="14"><path d="M1 4h9v6q-1 3-4.5 3T1 10z" fill="#fff" stroke="#000"/><path d="M10 5h2v4h-2" fill="none" stroke="#000"/><path d="M2 5h7" stroke="#c00000" stroke-dasharray="1 1"/></svg>
<div class="a nw m" style="left:880px;top:197px;font-size:12px;line-height:15px;letter-spacing:-0.2px">tera-Exit</div>
<svg class="a" style="left:863px;top:215px" width="14" height="14"><path d="M1 4h9v6q-1 3-4.5 3T1 10z" fill="#fff" stroke="#000"/><path d="M10 5h2v4h-2" fill="none" stroke="#000"/><path d="M2 5h7" stroke="#c00000" stroke-dasharray="1 1"/></svg>
<div class="a nw m" style="left:880px;top:214px;font-size:12px;line-height:15px;letter-spacing:-0.2px">Yukichan_</div>
<div class="a" style="left:1012px;top:263px;width:12px;height:253px;background:#fff"></div>
<div class="a" style="left:1012px;top:300px;width:12px;height:21px;background:#d4d0c8;border-top:1px solid #404040;border-bottom:1px solid #404040"><span class="a nw" style="left:2px;top:3px;font-size:12px">be</span></div>
<div class="btn" style="left:1012px;top:477px;width:12px;height:18px;"><div class="a" style="left:4px;top:5px;border-top:4px solid transparent;border-bottom:4px solid transparent;border-left:4px solid #000"></div></div>
<div class="a" style="left:1012px;top:495px;width:12px;height:21px;background:repeating-linear-gradient(135deg,#fff 0 1px,#c8c4bc 1px 3px)"></div>
<div class="w" style="left:385px;top:262px;width:628px;height:462px;"></div>
<div class="a" style="left:388px;top:265px;width:622px;height:19px;background:linear-gradient(90deg,#808080,#c0c0c0);overflow:hidden"><span class="a nw" style="left:20px;top:0;line-height:19px;color:#d4d0c8;font-size:12px;"></span></div>
<svg class="a" style="left:409px;top:266px;overflow:visible" width="65" height="20"><text x="0" y="14" font-size="12" fill="#d4d0c8" textLength="63" lengthAdjust="spacingAndGlyphs" >Delphi ヘルプ</text></svg>
<svg class="a" style="left:391px;top:266px" width="18" height="16"><path d="M2 9l8-7 7 5-8 7z" fill="#9030a0" stroke="#000"/><path d="M2 9v3l7 3 8-7V7l-8 7z" fill="#e0e0e0" stroke="#000"/><text x="8" y="9" font-size="7" fill="#ffd000" font-weight="bold">?</text></svg>
<div class="btn" style="left:991px;top:268px;width:16px;height:14px;"><svg width="16" height="14" class="a" style="left:0;top:0"><path d="M4.5 3.5l7 6M11.5 3.5l-7 6" stroke="#000" stroke-width="1.6"/></svg></div>
<div class="btn" style="left:973px;top:268px;width:16px;height:14px;"><div class="a" style="left:3px;top:2px;width:9px;height:8px;border:1px solid #000;border-top-width:2px"></div></div>
<div class="btn" style="left:957px;top:268px;width:16px;height:14px;"><div class="a" style="left:4px;top:9px;width:6px;height:2px;background:#000"></div></div>
<div class="a" style="left:723px;top:304px;width:287px;height:22px;background:#d4d0c8;border-top:1px solid #404040;border-bottom:1px solid #404040"></div>
<div class="btn" style="left:724px;top:305px;width:70px;height:20px;"><svg class="a" style="left:0;top:0" width="70" height="20" shape-rendering="crispEdges"><path d="M26 5l6 5-6 5M32 5l6 5-6 5" fill="none" stroke="#000" stroke-width="1.2" shape-rendering="auto"/><rect x="26" y="16" width="6" height="1" fill="#000"/></svg></div>
<div class="btn" style="left:794px;top:305px;width:66px;height:20px;"></div>
<svg class="a" style="left:807px;top:307px;overflow:visible" width="50" height="19"><text x="0" y="13" font-size="11" fill="#000" textLength="48" lengthAdjust="spacingAndGlyphs" >ヒストリ(H)</text></svg>
<div class="btn" style="left:860px;top:305px;width:150px;height:20px;"></div>
<div class="a" style="left:723px;top:326px;width:287px;height:37px;background:#c0c0c0;border-bottom:1px solid #404040"></div>
<div class="a" style="left:722px;top:363px;width:287px;height:358px;background:#fff"></div>
<svg class="a" style="left:0;top:0" width="1024" height="768"><text x="721" y="377" font-size="12.5" textLength="257" lengthAdjust="spacingAndGlyphs">な役割を演じます。<tspan font-weight="bold">inherited</tspan> はメソッドの定義</text><text x="721" y="390" font-size="12.5" textLength="37" lengthAdjust="spacingAndGlyphs">ります。</text><text x="721" y="406" font-size="12.5" textLength="262" lengthAdjust="spacingAndGlyphs">常のメソッド呼び出しになります。ただし，この 場</text><text x="721" y="419" font-size="12.5" textLength="264" lengthAdjust="spacingAndGlyphs">生元から始まります。たとえば，次の 行をメソッド</text><text x="721" y="482" font-size="12.5" textLength="268" lengthAdjust="spacingAndGlyphs">ソッドと同じ名前を持つ親メソッドが参照されます。</text><text x="721" y="496" font-size="12.5" textLength="274" lengthAdjust="spacingAndGlyphs">など）でのみ使用できます。この場合，<tspan font-weight="bold">inherited</tspan></text><text x="721" y="510" font-size="12.5" textLength="263" lengthAdjust="spacingAndGlyphs">タを指定しない場合，親メソッドには，記述中のメ</text><text x="721" y="523" font-size="12.5" textLength="91" lengthAdjust="spacingAndGlyphs">に例を示します。</text><text x="721" y="557" font-size="12.5" textLength="254" lengthAdjust="spacingAndGlyphs">ラクタに渡されたパラメータと同じパラメータで，</text><text x="721" y="571" font-size="12.5" textLength="264" lengthAdjust="spacingAndGlyphs">び出す場合には，識別子を　　　　　　　　を使用</text></svg>
<div class="w" style="left:56px;top:287px;width:668px;height:490px;"></div>
<div class="a" style="left:60px;top:290px;width:661px;height:18px;background:linear-gradient(90deg,#808080,#c0c0c0);overflow:hidden"><span class="a nw" style="left:20px;top:0;line-height:18px;color:#d4d0c8;font-size:12px;"></span></div>
<svg class="a" style="left:81px;top:290px;overflow:visible" width="260" height="20"><text x="0" y="14" font-size="12" fill="#d4d0c8" textLength="258" lengthAdjust="spacingAndGlyphs" >Tera Term − peacock.wakaba.toyonaka.osaka.jp VT</text></svg>
<svg class="a" style="left:62px;top:290px" width="18" height="18"><rect x="3" y="1" width="12" height="10" fill="#e8e800" stroke="#000" stroke-width="1.5"/><text x="5" y="9" font-size="7" font-weight="bold">VT</text><path d="M1 16l3-4h12l-1 4z" fill="#fff" stroke="#000"/></svg>
<div class="btn" style="left:702px;top:292px;width:16px;height:14px;"><svg width="16" height="14" class="a" style="left:0;top:0"><path d="M4.5 3.5l7 6M11.5 3.5l-7 6" stroke="#000" stroke-width="1.6"/></svg></div>
<div class="btn" style="left:684px;top:292px;width:16px;height:14px;"><div class="a" style="left:3px;top:2px;width:9px;height:8px;border:1px solid #000;border-top-width:2px"></div></div>
<div class="btn" style="left:668px;top:292px;width:16px;height:14px;"><div class="a" style="left:4px;top:9px;width:6px;height:2px;background:#000"></div></div>
<svg class="a" style="left:67px;top:308px;overflow:visible" width="21" height="20"><text x="1" y="15" font-size="12" fill="#fff" textLength="19" lengthAdjust="spacingAndGlyphs" >File</text><text x="0" y="14" font-size="12" fill="#808080" textLength="19" lengthAdjust="spacingAndGlyphs" >File</text></svg>
<svg class="a" style="left:100px;top:308px;overflow:visible" width="22" height="20"><text x="1" y="15" font-size="12" fill="#fff" textLength="20" lengthAdjust="spacingAndGlyphs" >Edit</text><text x="0" y="14" font-size="12" fill="#808080" textLength="20" lengthAdjust="spacingAndGlyphs" >Edit</text></svg>
<svg class="a" style="left:133px;top:308px;overflow:visible" width="32" height="20"><text x="1" y="15" font-size="12" fill="#fff" textLength="30" lengthAdjust="spacingAndGlyphs" >Setup</text><text x="0" y="14" font-size="12" fill="#808080" textLength="30" lengthAdjust="spacingAndGlyphs" >Setup</text></svg>
<svg class="a" style="left:176px;top:308px;overflow:visible" width="40" height="20"><text x="1" y="15" font-size="12" fill="#fff" textLength="38" lengthAdjust="spacingAndGlyphs" >Control</text><text x="0" y="14" font-size="12" fill="#808080" textLength="38" lengthAdjust="spacingAndGlyphs" >Control</text></svg>
<svg class="a" style="left:227px;top:308px;overflow:visible" width="41" height="20"><text x="1" y="15" font-size="12" fill="#fff" textLength="39" lengthAdjust="spacingAndGlyphs" >Window</text><text x="0" y="14" font-size="12" fill="#808080" textLength="39" lengthAdjust="spacingAndGlyphs" >Window</text></svg>
<svg class="a" style="left:280px;top:308px;overflow:visible" width="24" height="20"><text x="1" y="15" font-size="12" fill="#fff" textLength="22" lengthAdjust="spacingAndGlyphs" >Help</text><text x="0" y="14" font-size="12" fill="#808080" textLength="22" lengthAdjust="spacingAndGlyphs" >Help</text></svg>
<div class="a" style="left:59px;top:327px;width:661px;height:2px;background:#404040"></div>
<div class="a" style="left:62px;top:329px;width:640px;height:434px;background:#000"></div>
<div class="a" style="left:61px;top:330px;width:641px;height:18px;background:#fff"></div>
<div class="a pre m" style="left:62px;top:330px;font-size:16px;line-height:16px;height:18px;letter-spacing:-1.6px;padding-top:1px;transform:scaleY(1.15);transform-origin:0 0;font-weight:normal;color:#000">Buffers Files Tools Edit Search Mule Mew Help</div>
<div class="a pre m" style="left:62px;top:348px;font-size:16px;line-height:16px;height:18px;letter-spacing:-1.6px;padding-top:1px;transform:scaleY(1.15);transform-origin:0 0;font-weight:normal;color:#fff"> 6204  06/20 aino@remus.dti [Omimayu: 2161] Seishun_18 Kippu (00Summer) || [<span style="letter-spacing:0">い</span></div>
<div class="a pre m" style="left:62px;top:366px;font-size:16px;line-height:16px;height:18px;letter-spacing:-1.6px;padding-top:1px;transform:scaleY(1.15);transform-origin:0 0;font-weight:normal;color:#fff"> 6205  06/20 makoto-s       Re: question || Maci<span style="letter-spacing:0">です。</span> <span style="letter-spacing:0">以下のページに依れば、</span>7</div>
<div class="a" style="left:61px;top:726px;width:641px;height:18px;background:#fff"></div>
<div class="a pre m" style="left:62px;top:726px;font-size:16px;line-height:16px;height:18px;letter-spacing:-1.6px;padding-top:1px;transform:scaleY(1.15);transform-origin:0 0;font-weight:normal;color:#000">-<span style="letter-spacing:0">かんな</span>--J1:%%-F1  Mew: +inbox         10:36PM 0.02 Mail</div>
<div class="a pre m" style="left:62px;top:744px;font-size:16px;line-height:16px;height:18px;letter-spacing:-1.6px;padding-top:1px;transform:scaleY(1.15);transform-origin:0 0;font-weight:normal;color:#fff">Sending a message in background</div>
<div class="a" style="left:702px;top:329px;width:17px;height:434px;background:#eae8e4"></div>
<div class="btn" style="left:702px;top:329px;width:17px;height:17px;"><div class="a" style="left:4px;top:6px;border-left:4px solid transparent;border-right:4px solid transparent;border-bottom:4px solid #000"></div></div>
<div class="a" style="left:512px;top:564px;width:270px;height:220px;background:#fff;border-radius:8px"></div>
<div class="a" style="left:514px;top:566px;width:266px;height:220px;border:1px solid #000;border-radius:7px"></div>
<svg class="a" style="left:536px;top:597px;overflow:visible" width="130" height="20"><text x="0" y="14" font-size="12" fill="#000" textLength="128" lengthAdjust="spacingAndGlyphs" >メールが1通きています。</text></svg>
<svg class="a" style="left:536px;top:610px;overflow:visible" width="114" height="20"><text x="0" y="14" font-size="12" fill="#000" textLength="112" lengthAdjust="spacingAndGlyphs" >はやく受信しましょう。</text></svg>
<svg class="a" style="left:0;top:0" width="1024" height="768" viewBox="0 0 1024 768">
<g stroke="#000" stroke-width="3" stroke-linejoin="round">
<!-- tail -->
<path d="M966 735 Q1002 756 1020 730 Q1028 705 1008 696" fill="none" stroke="#000" stroke-width="15" stroke-linecap="round"/>
<path d="M966 735 Q1002 756 1020 730 Q1028 705 1008 696" fill="none" stroke="#9a6834" stroke-width="10" stroke-linecap="round"/>
<!-- right hand -->
<ellipse cx="998" cy="713" rx="9" ry="9" fill="#fde2c6"/>
<!-- right ear -->
<ellipse cx="1012" cy="652" rx="48" ry="41" fill="#9a6834"/>
<!-- left ear -->
<ellipse cx="840" cy="615" rx="28" ry="40" fill="#9a6834" transform="rotate(-10 840 615)"/>
<!-- feet -->
<ellipse cx="859" cy="748" rx="23" ry="13" fill="#fde2c6" transform="rotate(8 859 748)"/>
<ellipse cx="958" cy="760" rx="18" ry="10" fill="#fde2c6"/>
<!-- body -->
<path d="M838 673 L888 690 L962 687 L995 713 L978 725 L966 752 L952 756 L898 742 L852 735 L850 705 Z" fill="#9a6834"/>
<!-- left hand -->
<ellipse cx="830" cy="674" rx="12" ry="12" fill="#fde2c6"/>
<!-- head -->
<ellipse cx="916" cy="630" rx="74" ry="62" fill="#9a6834"/>
<!-- bow -->
<path d="M873 576 L890 551 L904 564 L906 559 L926 549 L932 564 L935 557 L953 552 L960 575 Q918 560 873 576 Z" fill="#f04848"/><path d="M920 553 L922 564 L916 566" fill="none" stroke-width="2.5"/>
<!-- face -->
<path d="M909 606 Q895 578 872 581 Q842 588 842 632 Q842 676 875 689 Q905 698 940 692 Q978 684 985 652 Q988 618 955 606 Q930 600 909 606 Z" fill="#fde2c6"/>
<!-- eye -->
<ellipse cx="872" cy="618" rx="14" ry="17" fill="#000"/>
<ellipse cx="872" cy="613" rx="10" ry="10.5" fill="#fff" stroke="none"/>
<!-- cheeks -->
<ellipse cx="852" cy="640" rx="7" ry="5" fill="#d0105a" stroke-width="2"/>
<ellipse cx="950" cy="670" rx="10" ry="5.5" fill="#d0105a" stroke-width="2"/>
<!-- wink -->
<path d="M960 631 L931 636 L953 658 M933 637 L962 646" fill="none" stroke-width="2.5"/>
<!-- mouth -->
<path d="M884 651 L914 657 L892 688 Z" fill="#f04848"/>
</g></svg>
<div class="a" style="left:0px;top:0px;width:2px;height:600px;background:#5a5a5a"></div>
</body></html>
